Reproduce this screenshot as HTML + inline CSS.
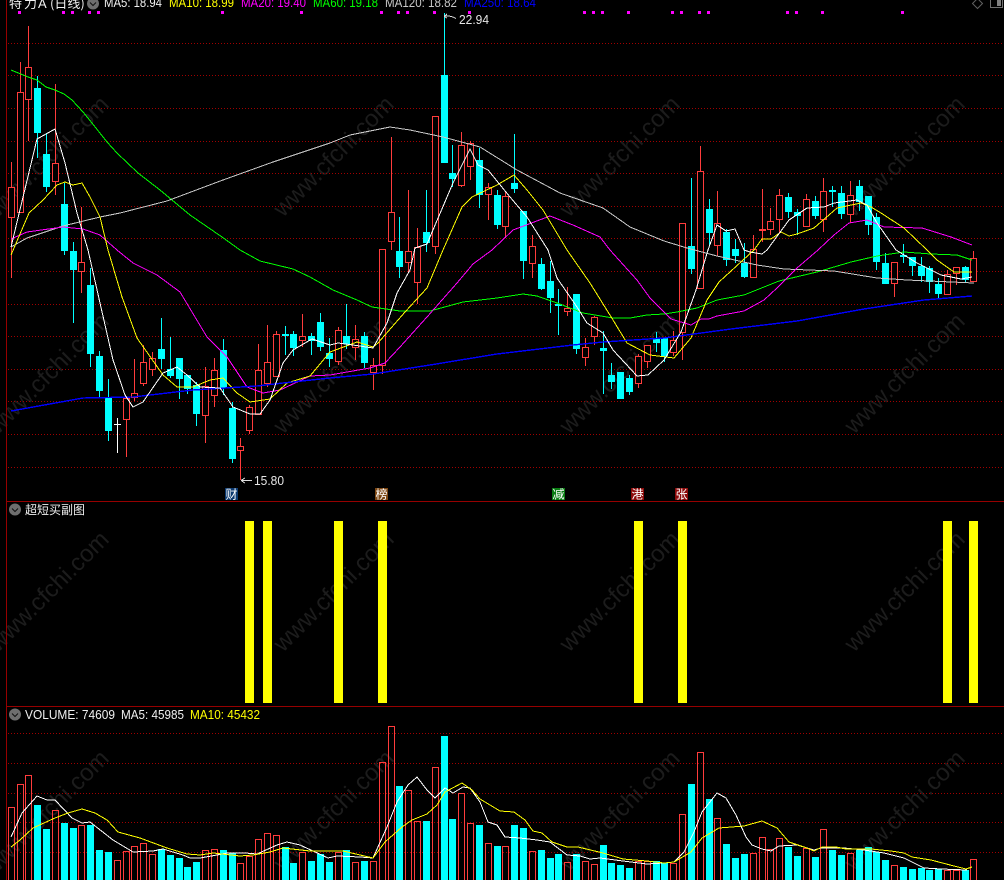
<!DOCTYPE html>
<html><head><meta charset="utf-8"><title>特力A 日线</title>
<style>
html,body{margin:0;padding:0;background:#000;width:1004px;height:880px;overflow:hidden}
svg{display:block;position:absolute;left:0;top:0}
text{font-family:"Liberation Sans","Noto Sans CJK SC",sans-serif;font-size:12.5px}
.cjk{font-family:"WenQuanYi Zen Hei","Noto Sans CJK SC",sans-serif;font-size:12px}
.t{font-family:"WenQuanYi Zen Hei","Noto Sans CJK SC",sans-serif;font-size:13px;fill:#f0f0f0}
.wm{font-size:24px;fill:#1c1c1c}
.l{fill:none;shape-rendering:crispEdges}
</style></head><body>
<svg width="1004" height="880" viewBox="0 0 1004 880" xmlns="http://www.w3.org/2000/svg">
<rect width="1004" height="880" fill="#000"/>
<!-- watermarks -->
<g class="wm">
<text class="wm" transform="translate(-2,218) rotate(-45)">www.cfchi.com</text>
<text class="wm" transform="translate(283,218) rotate(-45)">www.cfchi.com</text>
<text class="wm" transform="translate(569,218) rotate(-45)">www.cfchi.com</text>
<text class="wm" transform="translate(854,218) rotate(-45)">www.cfchi.com</text>
<text class="wm" transform="translate(-2,435) rotate(-45)">www.cfchi.com</text>
<text class="wm" transform="translate(283,435) rotate(-45)">www.cfchi.com</text>
<text class="wm" transform="translate(569,435) rotate(-45)">www.cfchi.com</text>
<text class="wm" transform="translate(854,435) rotate(-45)">www.cfchi.com</text>
<text class="wm" transform="translate(-2,653) rotate(-45)">www.cfchi.com</text>
<text class="wm" transform="translate(283,653) rotate(-45)">www.cfchi.com</text>
<text class="wm" transform="translate(569,653) rotate(-45)">www.cfchi.com</text>
<text class="wm" transform="translate(854,653) rotate(-45)">www.cfchi.com</text>
<text class="wm" transform="translate(-2,872) rotate(-45)">www.cfchi.com</text>
<text class="wm" transform="translate(283,872) rotate(-45)">www.cfchi.com</text>
<text class="wm" transform="translate(569,872) rotate(-45)">www.cfchi.com</text>
<text class="wm" transform="translate(854,872) rotate(-45)">www.cfchi.com</text>
</g>
<!-- grid -->
<path d="M8 43.5H1004M8 75.5H1004M8 108.5H1004M8 141.5H1004M8 173.5H1004M8 206.5H1004M8 238.5H1004M8 271.5H1004M8 304.5H1004M8 336.5H1004M8 369.5H1004M8 401.5H1004M8 434.5H1004M8 467.5H1004M8 733.5H1004M8 763.5H1004M8 793.5H1004M8 822.5H1004M8 852.5H1004" stroke="#a00000" stroke-width="1" stroke-dasharray="1 2" fill="none" shape-rendering="crispEdges"/>
<!-- separators -->
<path d="M6.5 0V880M6 501.5H1004M6 706.5H1004" stroke="#960000" stroke-width="1" fill="none" shape-rendering="crispEdges"/>
<!-- top magenta marks -->
<path fill="#ff00ff" shape-rendering="crispEdges" d="M18 11h3v3h-3zM62 11h3v3h-3zM71 11h3v3h-3zM88 11h3v3h-3zM97 11h3v3h-3zM221 11h3v3h-3zM300 11h3v3h-3zM380 11h3v3h-3zM397 11h3v3h-3zM406 11h3v3h-3zM433 11h3v3h-3zM468 11h3v3h-3zM583 11h3v3h-3zM592 11h3v3h-3zM601 11h3v3h-3zM627 11h3v3h-3zM671 11h3v3h-3zM680 11h3v3h-3zM698 11h3v3h-3zM707 11h3v3h-3zM786 11h3v3h-3zM795 11h3v3h-3zM821 11h3v3h-3zM901 11h3v3h-3z"/>
<!-- candles: cyan -->
<g shape-rendering="crispEdges">
<path stroke="#00ffff" stroke-width="1" fill="none" d="M37.5 76V158M46.5 133V192M64.5 183V255M73.5 242V323M90.5 268V367M99.5 351V398M108.5 379V441M161.5 318V369M170.5 337V378M179.5 358V399M187.5 375V394M196.5 382V426M223.5 339V395M232.5 402V463M285.5 326V355M293.5 331V356M311.5 333V355M320.5 313V351M329.5 338V367M346.5 304V349M364.5 332V368M399.5 217V278M426.5 190V252M444.5 13V163M452.5 145V187M479.5 148V208M497.5 190V229M514.5 134V193M523.5 211V279M541.5 258V290M550.5 261V313M558.5 289V335M576.5 294V354M603.5 331V394M611.5 363V389M620.5 372V399M629.5 375V395M656.5 332V352M664.5 338V362M691.5 178V274M709.5 199V246M726.5 229V266M735.5 239V263M744.5 243V278M788.5 193V218M797.5 209V235M815.5 196V219M832.5 186V207M841.5 186V219M859.5 180V211M868.5 196V235M876.5 213V270M885.5 253V284M903.5 244V263M912.5 257V276M921.5 257V282M929.5 266V293M938.5 278V298M965.5 266V283"/>
<path fill="#00ffff" d="M34 88h7v45h-7zM43 154h7v33h-7zM61 204h7v47h-7zM70 251h7v19h-7zM87 285h7v69h-7zM96 356h7v35h-7zM105 398h7v33h-7zM158 349h7v10h-7zM167 369h7v7h-7zM176 358h7v21h-7zM184 375h7v14h-7zM193 385h7v29h-7zM220 350h7v38h-7zM229 408h7v51h-7zM282 334h7v2h-7zM290 334h7v14h-7zM308 336h7v5h-7zM317 322h7v25h-7zM326 353h7v6h-7zM343 336h7v8h-7zM361 336h7v27h-7zM396 251h7v16h-7zM423 232h7v11h-7zM441 75h7v88h-7zM449 173h7v6h-7zM476 160h7v35h-7zM494 195h7v30h-7zM511 183h7v6h-7zM520 211h7v50h-7zM538 264h7v25h-7zM547 281h7v17h-7zM555 304h7v2h-7zM573 294h7v55h-7zM600 348h7v3h-7zM608 375h7v7h-7zM617 372h7v27h-7zM626 378h7v14h-7zM653 338h7v5h-7zM661 338h7v18h-7zM688 246h7v23h-7zM706 209h7v24h-7zM723 232h7v28h-7zM732 249h7v7h-7zM741 263h7v14h-7zM785 197h7v15h-7zM794 212h7v4h-7zM812 201h7v15h-7zM829 190h7v2h-7zM838 193h7v21h-7zM856 186h7v16h-7zM865 196h7v29h-7zM873 217h7v45h-7zM882 263h7v21h-7zM900 255h7v2h-7zM909 257h7v9h-7zM918 266h7v10h-7zM926 268h7v14h-7zM935 284h7v10h-7zM962 267h7v13h-7z"/>
<!-- candles: red wicks -->
<path stroke="#ff3c3c" stroke-width="1" fill="none" d="M11.5 162V278M20.5 62V212M28.5 26V141M55.5 84V195M81.5 207V293M126.5 398V457M134.5 359V401M143.5 345V386M152.5 352V376M205.5 367V443M214.5 358V407M240.5 438V480M249.5 405V434M258.5 344V415M267.5 325V387M276.5 331V376M302.5 314V347M338.5 327V365M355.5 325V360M373.5 358V390M382.5 249V374M391.5 137V250M408.5 190V272M417.5 228V304M435.5 116V254M461.5 132V187M470.5 141V180M488.5 183V220M505.5 191V238M532.5 235V278M567.5 287V316M585.5 338V366M594.5 316V345M638.5 354V388M647.5 345V368M673.5 331V356M682.5 223V360M700.5 146V288M717.5 191V256M753.5 235V277M762.5 189V242M770.5 208V235M779.5 189V233M806.5 194V226M823.5 178V232M850.5 181V223M894.5 262V297M947.5 270V294M956.5 267V285M973.5 251V281"/>
<!-- candles: red bodies -->
<path stroke="#ff3c3c" stroke-width="1" fill="#000" d="M8.5 187.5h6v30h-6zM17.5 92.5h6v120h-6zM25.5 67.5h6v32h-6zM52.5 163.5h6v18h-6zM78.5 262.5h6v9h-6zM123.5 398.5h6v21h-6zM131.5 393.5h6v4h-6zM140.5 362.5h6v21h-6zM149.5 358.5h6v11h-6zM202.5 386.5h6v29h-6zM211.5 370.5h6v25h-6zM237.5 446.5h6v4h-6zM246.5 407.5h6v23h-6zM255.5 370.5h6v44h-6zM264.5 362.5h6v21h-6zM273.5 334.5h6v42h-6zM299.5 336.5h6v4h-6zM335.5 330.5h6v31h-6zM352.5 339.5h6v8h-6zM370.5 365.5h6v7h-6zM379.5 249.5h6v116h-6zM388.5 212.5h6v29h-6zM405.5 251.5h6v11h-6zM414.5 247.5h6v35h-6zM432.5 116.5h6v130h-6zM458.5 145.5h6v40h-6zM467.5 143.5h6v23h-6zM485.5 187.5h6v7h-6zM502.5 196.5h6v30h-6zM529.5 246.5h6v17h-6zM564.5 308.5h6v3h-6zM582.5 347.5h6v10h-6zM591.5 317.5h6v19h-6zM635.5 356.5h6v27h-6zM644.5 345.5h6v16h-6zM670.5 340.5h6v12h-6zM679.5 223.5h6v109h-6zM697.5 171.5h6v117h-6zM714.5 223.5h6v22h-6zM750.5 249.5h6v28h-6zM767.5 221.5h6v8h-6zM776.5 195.5h6v24h-6zM803.5 199.5h6v27h-6zM820.5 191.5h6v28h-6zM847.5 195.5h6v19h-6zM891.5 262.5h6v21h-6zM944.5 274.5h6v20h-6zM953.5 267.5h6v6h-6zM970.5 258.5h6v23h-6z"/>
<rect x="759" y="229" width="7" height="2" fill="#ff3c3c"/>
<path stroke="#fff" d="M117.5 418V453M114 424.5H121" fill="none"/>
</g>
<!-- main MA lines -->
<polyline class="l" stroke="#00ff00" points="11,70 28,77 37,80 46,87 55,90 64,94 72,100 83,112 92,123 107,142 117,153 138,173 160,190 172,200 190,215 222,237 240,250 260,261 293,269 310,277 333,290 357,300 372,307 400,311 430,311 463,302 497,298 523,294 537,296 557,303 583,313 613,318 630,318 647,315 664,314 677,312 697,308 717,300 744,295 779,281 817,272 851,262 877,256 904,252 931,254 957,255 972,260"/>
<polyline class="l" stroke="#c8c8c8" points="11,247 27,238 63,226 100,217 120,213 167,201 223,180 273,162 330,143 350,135 390,127 410,130 443,137 480,147 517,170 560,193 603,208 630,227 664,241 687,248 717,256 757,265 784,269 834,271 877,278 907,280 974,283"/>
<polyline class="l" stroke="#ff00ff" points="11,239 27,232 63,227 83,229 100,235 117,250 133,263 157,275 180,292 207,337 227,357 247,387 263,393 280,390 310,376 330,375 370,368 385,363 400,347 427,317 457,283 473,264 492,250 513,230 550,216 573,225 600,237 610,250 637,280 650,298 671,319 691,325 701,319 709,319 717,316 744,311 764,300 777,288 797,268 818,250 834,235 849,223 867,220 884,227 922,228 951,237 972,245"/>
<polyline class="l" stroke="#ffff00" points="11,255 29,213 43,200 57,185 65,182 73,185 82,183 90,197 100,217 108,250 122,297 137,338 163,375 177,387 193,387 210,380 223,378 237,393 250,402 270,399 287,383 310,376 330,352 357,342 373,347 378,343 405,312 427,288 443,250 462,207 472,197 497,185 514,175 527,190 543,210 567,250 590,283 613,320 627,343 650,355 674,358 691,338 707,300 719,282 754,250 762,239 771,239 781,232 789,236 797,234 814,228 837,208 861,203 871,207 881,213 904,228 927,250 937,260 954,272 972,272"/>
<polyline class="l" stroke="#0000ff" stroke-width="1.4" points="11,411 83,398 133,397 193,390 257,386 283,383 330,378 373,374 430,365 497,354 573,345 603,342 664,338 731,329 797,321 864,309 924,300 972,296"/>
<polyline class="l" stroke="#ffffff" points="11,247 37,139 55,129 65,163 77,213 88,250 100,303 113,360 125,395 133,407 143,402 163,373 177,367 187,375 200,387 220,388 233,407 250,414 260,414 270,400 283,363 293,350 312,339 330,345 338,343 353,345 373,348 387,323 397,293 410,270 415,248 427,244 453,183 470,149 478,165 488,170 510,197 527,217 548,250 557,278 577,307 587,323 603,333 613,350 637,376 648,375 664,360 681,332 696,290 708,250 717,225 726,231 735,229 744,250 750,252 762,254 767,250 789,220 807,208 824,207 834,203 857,200 867,205 877,223 896,250 917,263 941,275 961,279 972,277"/>
<!-- high/low labels -->
<path d="M444 16.5L447 14M444 16.5L447 18M444 16.5Q450 15 456 18.5" stroke="#ddd" fill="none" shape-rendering="crispEdges"/>
<text x="459" y="24" fill="#e6e6e6" textLength="30" lengthAdjust="spacingAndGlyphs">22.94</text>
<path d="M241 480.5H252M241 480.5L245 478M241 480.5L245 483" stroke="#ddd" fill="none" shape-rendering="crispEdges"/>
<text x="254" y="485" fill="#e6e6e6" textLength="30" lengthAdjust="spacingAndGlyphs">15.80</text>
<!-- tags -->
<rect x="225" y="488" width="13" height="12" fill="#0c3a70"/><text class="cjk" x="225.5" y="498.5" fill="#fff">财</text>
<rect x="375" y="488" width="13" height="12" fill="#7c4612"/><text class="cjk" x="375.5" y="498.5" fill="#fff">榜</text>
<rect x="552" y="488" width="13" height="12" fill="#0a7d14"/><text class="cjk" x="552.5" y="498.5" fill="#fff">减</text>
<rect x="631" y="488" width="13" height="12" fill="#8c0a0a"/><text class="cjk" x="631.5" y="498.5" fill="#fff">港</text>
<rect x="675" y="488" width="13" height="12" fill="#8c0a0a"/><text class="cjk" x="675.5" y="498.5" fill="#fff">张</text>
<!-- sub chart -->
<path fill="#ffff00" shape-rendering="crispEdges" d="M245 521h9v182h-9zM263 521h9v182h-9zM334 521h9v182h-9zM378 521h9v182h-9zM634 521h9v182h-9zM678 521h9v182h-9zM943 521h9v182h-9zM969 521h9v182h-9z"/>
<!-- volume bars -->
<g shape-rendering="crispEdges">
<path fill="#00ffff" d="M34 805h7v75h-7zM43 829h7v51h-7zM61 823h7v57h-7zM70 828h7v52h-7zM87 825h7v55h-7zM96 850h7v30h-7zM105 852h7v28h-7zM158 849h7v31h-7zM167 855h7v25h-7zM176 858h7v22h-7zM184 867h7v13h-7zM193 862h7v18h-7zM220 850h7v30h-7zM229 853h7v27h-7zM282 847h7v33h-7zM290 863h7v17h-7zM308 861h7v19h-7zM317 854h7v26h-7zM326 862h7v18h-7zM343 850h7v30h-7zM361 861h7v19h-7zM396 786h7v94h-7zM423 821h7v59h-7zM441 736h7v144h-7zM449 819h7v61h-7zM476 825h7v55h-7zM494 846h7v34h-7zM511 825h7v55h-7zM520 828h7v52h-7zM538 850h7v30h-7zM547 858h7v22h-7zM555 854h7v26h-7zM573 854h7v26h-7zM600 845h7v35h-7zM608 863h7v17h-7zM617 865h7v15h-7zM626 868h7v12h-7zM653 861h7v19h-7zM661 863h7v17h-7zM688 784h7v96h-7zM706 799h7v81h-7zM723 844h7v36h-7zM732 858h7v22h-7zM741 854h7v26h-7zM785 847h7v33h-7zM794 856h7v24h-7zM812 857h7v23h-7zM829 850h7v30h-7zM838 855h7v25h-7zM856 850h7v30h-7zM865 847h7v33h-7zM873 852h7v28h-7zM882 860h7v20h-7zM900 867h7v13h-7zM909 869h7v11h-7zM918 868h7v12h-7zM926 870h7v10h-7zM935 869h7v11h-7zM962 870h7v10h-7z"/>
<path fill="none" stroke="#ff3c3c" stroke-width="1" d="M8.5 807.5h6V881h-6zM17.5 784.5h6V881h-6zM25.5 775.5h6V881h-6zM52.5 810.5h6V881h-6zM78.5 825.5h6V881h-6zM114.5 860.5h6V881h-6zM123.5 851.5h6V881h-6zM131.5 846.5h6V881h-6zM140.5 843.5h6V881h-6zM149.5 854.5h6V881h-6zM202.5 850.5h6V881h-6zM211.5 849.5h6V881h-6zM237.5 863.5h6V881h-6zM246.5 856.5h6V881h-6zM255.5 839.5h6V881h-6zM264.5 833.5h6V881h-6zM273.5 835.5h6V881h-6zM299.5 852.5h6V881h-6zM335.5 852.5h6V881h-6zM352.5 862.5h6V881h-6zM370.5 861.5h6V881h-6zM379.5 762.5h6V881h-6zM388.5 726.5h6V881h-6zM405.5 790.5h6V881h-6zM414.5 821.5h6V881h-6zM432.5 767.5h6V881h-6zM458.5 793.5h6V881h-6zM467.5 823.5h6V881h-6zM485.5 843.5h6V881h-6zM502.5 846.5h6V881h-6zM529.5 851.5h6V881h-6zM564.5 862.5h6V881h-6zM582.5 861.5h6V881h-6zM591.5 864.5h6V881h-6zM635.5 861.5h6V881h-6zM644.5 861.5h6V881h-6zM670.5 863.5h6V881h-6zM679.5 814.5h6V881h-6zM697.5 752.5h6V881h-6zM714.5 818.5h6V881h-6zM750.5 853.5h6V881h-6zM759.5 837.5h6V881h-6zM767.5 849.5h6V881h-6zM776.5 838.5h6V881h-6zM803.5 848.5h6V881h-6zM820.5 829.5h6V881h-6zM847.5 853.5h6V881h-6zM891.5 865.5h6V881h-6zM944.5 870.5h6V881h-6zM953.5 870.5h6V881h-6zM970.5 859.5h6V881h-6z"/>
</g>
<!-- volume MA lines -->
<polyline class="l" stroke="#ffffff" points="11,837 22,813 37,796 47,800 55,800 72,818 82,823 90,822 113,840 133,852 153,851 163,849 183,855 190,858 200,858 217,855 227,853 245,853 257,854 277,845 287,842 300,845 328,858 337,856 360,857 373,858 387,827 397,802 408,785 417,777 427,790 435,798 445,788 453,793 463,787 470,788 480,802 488,822 497,825 505,837 520,838 537,840 550,842 567,855 580,856 590,859 600,858 623,861 647,864 664,863 674,862 684,852 694,832 702,812 717,793 726,798 736,815 746,837 752,845 762,849 771,851 779,846 797,845 807,848 814,850 821,848 844,848 864,850 884,853 904,858 924,868 941,869 967,870"/>
<polyline class="l" stroke="#ffff00" points="11,847 20,840 33,828 55,818 68,813 82,809 95,813 107,820 118,832 140,838 167,848 187,854 200,855 213,853 240,856 253,855 270,852 283,848 310,851 343,851 373,858 385,842 402,827 412,820 427,814 437,805 445,792 462,783 472,790 480,799 500,811 514,812 525,820 533,831 542,833 552,842 567,847 578,847 603,853 623,859 647,861 664,863 674,862 691,852 702,838 719,828 744,826 762,821 777,828 789,842 807,848 814,851 822,847 836,847 846,849 871,849 891,851 904,853 912,857 931,860 954,866 966,869 972,867"/>
<!-- headers -->
<text class="t" x="9" y="8">特</text>
<text class="t" x="24" y="8">力</text>
<text class="t" x="38" y="8" style="font-family:'Liberation Sans',sans-serif">A</text>
<text class="t" x="50" y="8">(日线)</text>
<circle cx="93" cy="3.5" r="6" fill="#6e6e6e"/><path d="M90 2.5L93 5.5L96 2.5" stroke="#111" fill="none"/>
<text x="104" y="7" fill="#f0f0f0" textLength="58" lengthAdjust="spacingAndGlyphs">MA5: 18.94</text>
<text x="169" y="7" fill="#ffff00" textLength="65" lengthAdjust="spacingAndGlyphs">MA10: 18.99</text>
<text x="241" y="7" fill="#ff00ff" textLength="65" lengthAdjust="spacingAndGlyphs">MA20: 19.40</text>
<text x="313" y="7" fill="#00ff00" textLength="65" lengthAdjust="spacingAndGlyphs">MA60: 19.18</text>
<text x="385" y="7" fill="#c8c8c8" textLength="72" lengthAdjust="spacingAndGlyphs">MA120: 18.82</text>
<text x="464" y="7" fill="#0000ff" textLength="72" lengthAdjust="spacingAndGlyphs">MA250: 18.64</text>
<path d="M977.5 -1.5L982.5 3.5L977.5 8.5L972.5 3.5Z" stroke="#606060" fill="none"/>
<path d="M990.5 -2V7.5H1002.5V-2" stroke="#707070" fill="none"/><rect x="997" y="-1" width="4" height="7" fill="#808080"/>
<circle cx="15" cy="509.5" r="6" fill="#6e6e6e"/><path d="M12 508.5L15 511.5L18 508.5" stroke="#111" fill="none"/>
<text class="cjk" x="25" y="514" fill="#f0f0f0" textLength="60">超短买副图</text>
<circle cx="15" cy="714.5" r="6" fill="#6e6e6e"/><path d="M12 713.5L15 716.5L18 713.5" stroke="#111" fill="none"/>
<text x="25" y="719" fill="#f0f0f0" textLength="90" lengthAdjust="spacingAndGlyphs">VOLUME: 74609</text>
<text x="121" y="719" fill="#f0f0f0" textLength="63" lengthAdjust="spacingAndGlyphs">MA5: 45985</text>
<text x="190" y="719" fill="#ffff00" textLength="70" lengthAdjust="spacingAndGlyphs">MA10: 45432</text>
</svg>
</body></html>
